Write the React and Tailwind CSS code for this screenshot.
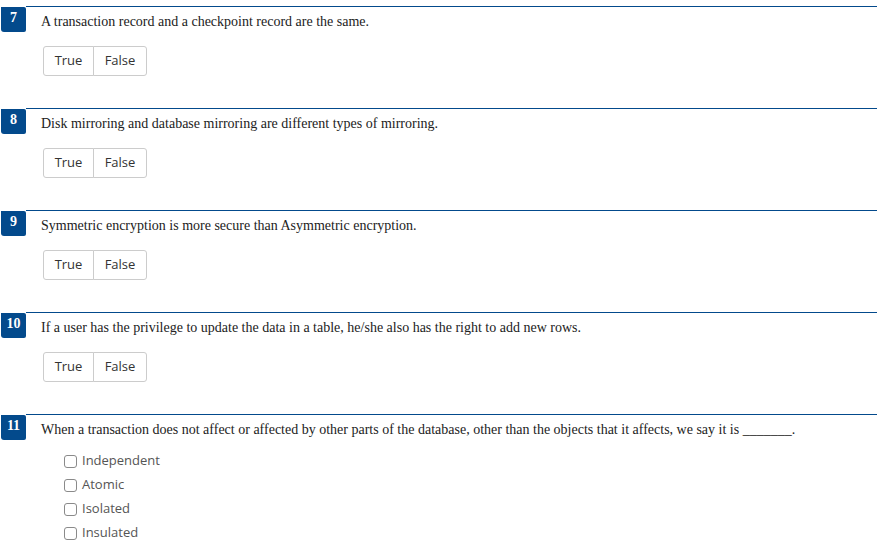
import React from "react";

const questions = [
  { n: 7, text: "A transaction record and a checkpoint record are the same.", type: "tf" },
  { n: 8, text: "Disk mirroring and database mirroring are different types of mirroring.", type: "tf" },
  { n: 9, text: "Symmetric encryption is more secure than Asymmetric encryption.", type: "tf" },
  { n: 10, text: "If a user has the privilege to update the data in a table, he/she also has the right to add new rows.", type: "tf" },
  {
    n: 11,
    text: "When a transaction does not affect or affected by other parts of the database, other than the objects that it affects, we say it is _______.",
    type: "mc",
    options: ["Independent", "Atomic", "Isolated", "Insulated"],
  },
];

function TrueFalse() {
  return (
    <div className="ml-[17px] mt-[14px] inline-flex h-[30px] font-['Open_Sans',sans-serif] text-[13px] text-[#333]">
      <button className="w-[51px] rounded-l-[3px] border border-[#ccc] bg-white">True</button>
      <button className="-ml-px w-[54px] rounded-r-[3px] border border-[#ccc] bg-white">False</button>
    </div>
  );
}

function Options({ options }) {
  return (
    <div className="ml-[38px] mt-[9px] flex flex-col font-['Open_Sans',sans-serif] text-[13px] text-[#555]">
      {options.map((o) => (
        <label key={o} className="flex h-[24px] items-center gap-[5px]">
          <span className="h-[13px] w-[13px] rounded-[3px] border border-[#8a8a8a] bg-white" />
          <span>{o}</span>
        </label>
      ))}
    </div>
  );
}

export default function App() {
  return (
    <div className="min-h-[558px] w-[878px] bg-white pt-[6px]">
      {questions.map((q) => (
        <div key={q.n} className="flex h-[102px] pr-px">
          <div className="mt-px ml-px h-[25px] w-[25px] shrink-0 rounded-bl-[3px] rounded-r-[2px] bg-[#034a8c] pt-[1px] text-center font-['Liberation_Serif',serif] text-[14px] font-bold leading-[20px] text-white">
            {q.n}
          </div>
          <div className="flex-1 border-t border-[#034a8c]">
            <p className="pl-[15px] pt-[5px] font-['Liberation_Serif',serif] text-[14px] leading-[20px] text-[#222]">
              {q.text}
            </p>
            {q.type === "tf" ? <TrueFalse /> : <Options options={q.options} />}
          </div>
        </div>
      ))}
    </div>
  );
}
